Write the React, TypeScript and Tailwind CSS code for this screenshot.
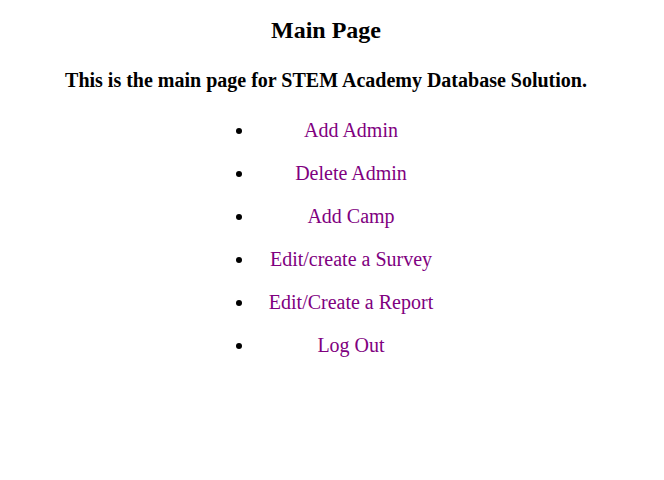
const links = [
  'Add Admin',
  'Delete Admin',
  'Add Camp',
  'Edit/create a Survey',
  'Edit/Create a Report',
  'Log Out',
];

export default function App() {
  return (
    <div className="min-h-[480px] w-[664px] bg-white text-black font-['Liberation_Serif','Times_New_Roman',serif] pt-[16px] pr-[12px]">
      <h2 className="text-center text-[24px] font-bold leading-[28px]">Main Page</h2>
      <h3 className="mt-[25px] text-center text-[20px] font-bold leading-[23px]">
        This is the main page for STEM Academy Database Solution.
      </h3>
      <ul className="mt-[27px] ml-[255px] w-[192px] list-disc flex flex-col gap-[20px]">
        {links.map((l) => (
          <li key={l} className="text-center text-[20px] leading-[23px]">
            <a href="#" className="text-[#800080]">{l}</a>
          </li>
        ))}
      </ul>
    </div>
  );
}
